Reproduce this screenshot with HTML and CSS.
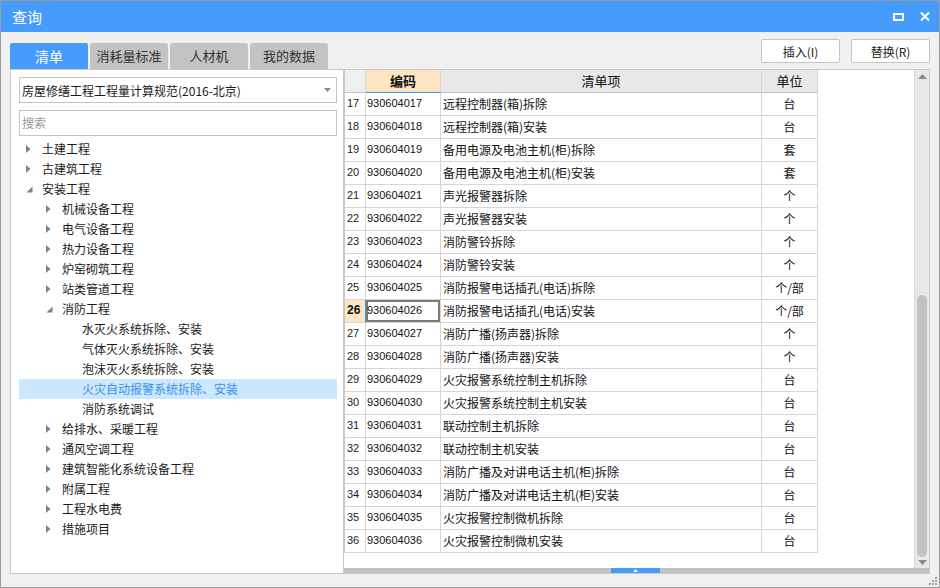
FILE: index.html
```html
<!DOCTYPE html>
<html lang="zh">
<head>
<meta charset="utf-8">
<title>查询</title>
<link rel="stylesheet" href="styles.css">
</head>
<body>
<div class="window">
  <div class="titlebar">
    <span class="title">查询</span>
    <span class="tb-icons">
      <span class="ico-max"></span>
      <svg class="ico-close" width="10" height="9" viewBox="0 0 10 9"><path d="M1 0.5 L9 8.5 M9 0.5 L1 8.5" stroke="#fff" stroke-width="2" fill="none"/></svg>
    </span>
  </div>
  <div class="toolbar">
    <div class="tabs">
      <div class="tab active">清单</div>
      <div class="tab">消耗量标准</div>
      <div class="tab">人材机</div>
      <div class="tab">我的数据</div>
    </div>
    <div class="buttons">
      <button class="btn">插入(I)</button>
      <button class="btn">替换(R)</button>
    </div>
  </div>
  <div class="main">
    <div class="left">
      <div class="select"><span>房屋修缮工程工程量计算规范(2016-北京)</span><svg width="7" height="4" viewBox="0 0 7 4"><path d="M0 0 H7 L3.5 4 Z" fill="#888"/></svg></div>
      <div class="search">搜索</div>
      <div class="tree">
        <div class="node l0"><span class="arr"><svg width="5" height="8" viewBox="0 0 5 8"><path d="M0 0 L4.5 4 L0 8 Z" fill="#808080"/></svg></span>土建工程</div>
        <div class="node l0"><span class="arr"><svg width="5" height="8" viewBox="0 0 5 8"><path d="M0 0 L4.5 4 L0 8 Z" fill="#808080"/></svg></span>古建筑工程</div>
        <div class="node l0"><span class="arr"><svg width="7" height="7" viewBox="0 0 7 7"><path d="M6.5 0.5 V6.5 H0.5 Z" fill="#808080"/></svg></span>安装工程</div>
        <div class="node l1"><span class="arr"><svg width="5" height="8" viewBox="0 0 5 8"><path d="M0 0 L4.5 4 L0 8 Z" fill="#808080"/></svg></span>机械设备工程</div>
        <div class="node l1"><span class="arr"><svg width="5" height="8" viewBox="0 0 5 8"><path d="M0 0 L4.5 4 L0 8 Z" fill="#808080"/></svg></span>电气设备工程</div>
        <div class="node l1"><span class="arr"><svg width="5" height="8" viewBox="0 0 5 8"><path d="M0 0 L4.5 4 L0 8 Z" fill="#808080"/></svg></span>热力设备工程</div>
        <div class="node l1"><span class="arr"><svg width="5" height="8" viewBox="0 0 5 8"><path d="M0 0 L4.5 4 L0 8 Z" fill="#808080"/></svg></span>炉窑砌筑工程</div>
        <div class="node l1"><span class="arr"><svg width="5" height="8" viewBox="0 0 5 8"><path d="M0 0 L4.5 4 L0 8 Z" fill="#808080"/></svg></span>站类管道工程</div>
        <div class="node l1"><span class="arr"><svg width="7" height="7" viewBox="0 0 7 7"><path d="M6.5 0.5 V6.5 H0.5 Z" fill="#808080"/></svg></span>消防工程</div>
        <div class="node l2"><span class="arr"></span>水灭火系统拆除、安装</div>
        <div class="node l2"><span class="arr"></span>气体灭火系统拆除、安装</div>
        <div class="node l2"><span class="arr"></span>泡沫灭火系统拆除、安装</div>
        <div class="node l2 selected"><span class="arr"></span>火灾自动报警系统拆除、安装</div>
        <div class="node l2"><span class="arr"></span>消防系统调试</div>
        <div class="node l1"><span class="arr"><svg width="5" height="8" viewBox="0 0 5 8"><path d="M0 0 L4.5 4 L0 8 Z" fill="#808080"/></svg></span>给排水、采暖工程</div>
        <div class="node l1"><span class="arr"><svg width="5" height="8" viewBox="0 0 5 8"><path d="M0 0 L4.5 4 L0 8 Z" fill="#808080"/></svg></span>通风空调工程</div>
        <div class="node l1"><span class="arr"><svg width="5" height="8" viewBox="0 0 5 8"><path d="M0 0 L4.5 4 L0 8 Z" fill="#808080"/></svg></span>建筑智能化系统设备工程</div>
        <div class="node l1"><span class="arr"><svg width="5" height="8" viewBox="0 0 5 8"><path d="M0 0 L4.5 4 L0 8 Z" fill="#808080"/></svg></span>附属工程</div>
        <div class="node l1"><span class="arr"><svg width="5" height="8" viewBox="0 0 5 8"><path d="M0 0 L4.5 4 L0 8 Z" fill="#808080"/></svg></span>工程水电费</div>
        <div class="node l1"><span class="arr"><svg width="5" height="8" viewBox="0 0 5 8"><path d="M0 0 L4.5 4 L0 8 Z" fill="#808080"/></svg></span>措施项目</div>
      </div>
    </div>
    <div class="right">
      <div class="grid-area">
        <div class="grid">
          <div class="row head">
            <div class="c rn"></div>
            <div class="c code sel-col">编码</div>
            <div class="c name">清单项</div>
            <div class="c unit">单位</div>
          </div>
          <div class="row"><div class="c rn">17</div><div class="c code">930604017</div><div class="c name">远程控制器(箱)拆除</div><div class="c unit">台</div></div>
          <div class="row"><div class="c rn">18</div><div class="c code">930604018</div><div class="c name">远程控制器(箱)安装</div><div class="c unit">台</div></div>
          <div class="row"><div class="c rn">19</div><div class="c code">930604019</div><div class="c name">备用电源及电池主机(柜)拆除</div><div class="c unit">套</div></div>
          <div class="row"><div class="c rn">20</div><div class="c code">930604020</div><div class="c name">备用电源及电池主机(柜)安装</div><div class="c unit">套</div></div>
          <div class="row"><div class="c rn">21</div><div class="c code">930604021</div><div class="c name">声光报警器拆除</div><div class="c unit">个</div></div>
          <div class="row"><div class="c rn">22</div><div class="c code">930604022</div><div class="c name">声光报警器安装</div><div class="c unit">个</div></div>
          <div class="row"><div class="c rn">23</div><div class="c code">930604023</div><div class="c name">消防警铃拆除</div><div class="c unit">个</div></div>
          <div class="row"><div class="c rn">24</div><div class="c code">930604024</div><div class="c name">消防警铃安装</div><div class="c unit">个</div></div>
          <div class="row"><div class="c rn">25</div><div class="c code">930604025</div><div class="c name">消防报警电话插孔(电话)拆除</div><div class="c unit">个/部</div></div>
          <div class="row current"><div class="c rn">26</div><div class="c code focus">930604026</div><div class="c name">消防报警电话插孔(电话)安装</div><div class="c unit">个/部</div></div>
          <div class="row"><div class="c rn">27</div><div class="c code">930604027</div><div class="c name">消防广播(扬声器)拆除</div><div class="c unit">个</div></div>
          <div class="row"><div class="c rn">28</div><div class="c code">930604028</div><div class="c name">消防广播(扬声器)安装</div><div class="c unit">个</div></div>
          <div class="row"><div class="c rn">29</div><div class="c code">930604029</div><div class="c name">火灾报警系统控制主机拆除</div><div class="c unit">台</div></div>
          <div class="row"><div class="c rn">30</div><div class="c code">930604030</div><div class="c name">火灾报警系统控制主机安装</div><div class="c unit">台</div></div>
          <div class="row"><div class="c rn">31</div><div class="c code">930604031</div><div class="c name">联动控制主机拆除</div><div class="c unit">台</div></div>
          <div class="row"><div class="c rn">32</div><div class="c code">930604032</div><div class="c name">联动控制主机安装</div><div class="c unit">台</div></div>
          <div class="row"><div class="c rn">33</div><div class="c code">930604033</div><div class="c name">消防广播及对讲电话主机(柜)拆除</div><div class="c unit">台</div></div>
          <div class="row"><div class="c rn">34</div><div class="c code">930604034</div><div class="c name">消防广播及对讲电话主机(柜)安装</div><div class="c unit">台</div></div>
          <div class="row"><div class="c rn">35</div><div class="c code">930604035</div><div class="c name">火灾报警控制微机拆除</div><div class="c unit">台</div></div>
          <div class="row"><div class="c rn">36</div><div class="c code">930604036</div><div class="c name">火灾报警控制微机安装</div><div class="c unit">台</div></div>
        </div>
        <div class="vscroll">
          <svg class="up" width="9" height="5" viewBox="0 0 9 5"><path d="M0 5 L4.5 0 L9 5 Z" fill="#8a8a8a"/></svg>
          <div class="vtrack"><div class="vthumb"></div></div>
          <svg class="down" width="9" height="5" viewBox="0 0 9 5"><path d="M0 0 L9 0 L4.5 5 Z" fill="#8a8a8a"/></svg>
        </div>
      </div>
      <div class="hscroll"><div class="hthumb"><svg width="5" height="3" viewBox="0 0 5 3"><path d="M0 3 L2.5 0 L5 3 Z" fill="#fff"/></svg></div></div>
    </div>
  </div>
  <div class="footer">
    <svg class="grip" width="8" height="8" viewBox="0 0 8 8"><g fill="#a0a0a0"><rect x="6" y="0" width="2" height="2"/><rect x="3" y="3" width="2" height="2"/><rect x="6" y="3" width="2" height="2"/><rect x="0" y="6" width="2" height="2"/><rect x="3" y="6" width="2" height="2"/><rect x="6" y="6" width="2" height="2"/></g></svg>
  </div>
</div>
</body>
</html>
```

FILE: styles.css
```css
* { box-sizing: border-box; }
html, body { margin: 0; padding: 0; }
body {
  font-family: "Noto Sans CJK SC", "Liberation Sans", sans-serif;
  font-size: 12px;
  color: #1a1a1a;
  background: #f0f0f0;
}
.window {
  width: 940px;
  height: 588px;
  border: 1px solid #9c9c9c;
  background: #f0f0f0;
  display: flex;
  flex-direction: column;
  position: relative;
}
.titlebar {
  height: 31px;
  background: #459cfd;
  display: flex;
  align-items: center;
  justify-content: space-between;
  padding: 0 9px 0 11px;
  color: #fff;
}
.title { font-size: 15px; line-height: 31px; }
.tb-icons { display: flex; align-items: center; gap: 16px; }
.ico-max {
  width: 11px;
  height: 8px;
  border: 2px solid #fff;
  display: block;
}
.ico-close { display: block; }

.toolbar {
  height: 37px;
  padding: 0 9px;
  display: flex;
  justify-content: space-between;
}
.tabs { display: flex; align-items: flex-end; gap: 2px; }
.tab {
  width: 78px;
  height: 26px;
  line-height: 26px;
  text-align: center;
  background: #c3c3c3;
  color: #333;
  font-size: 13px;
  border-radius: 2px 2px 0 0;
}
.tab.active { background: #459cfd; color: #fff; font-size: 14px; }
.buttons { display: flex; gap: 11px; padding-top: 7px; }
.btn {
  width: 79px;
  height: 24px;
  background: #fff;
  border: 1px solid #c4c4c4;
  border-radius: 2px;
  font-family: "Noto Sans CJK SC", "Liberation Sans", sans-serif;
  font-size: 12px;
  color: #222;
  padding: 0;
}

.main {
  height: 505px;
  padding: 0 9px;
  display: flex;
}
.left {
  width: 334px;
  background: #fff;
  border: 1px solid #c8c8c8;
  padding: 7px 6px 0 8px;
}
.select {
  height: 26px;
  border: 1px solid #c4c4c4;
  display: flex;
  align-items: center;
  justify-content: space-between;
  padding: 0 5px 0 2px;
  font-size: 12px;
  color: #1a1a1a;
}
.select svg { display: block; }
.search {
  height: 26px;
  margin-top: 7px;
  border: 1px solid #c4c4c4;
  padding: 0 2px;
  line-height: 24px;
  color: #999;
  font-size: 12px;
}
.tree { margin-top: 3px; }
.node {
  height: 20px;
  line-height: 20px;
  display: flex;
  align-items: center;
  font-size: 12px;
  color: #1a1a1a;
  white-space: nowrap;
}
.node.l1 { padding-left: 20px; }
.node.l2 { padding-left: 40px; }
.arr {
  width: 23px;
  flex: none;
  display: flex;
  align-items: center;
  padding-left: 7px;
}
.arr svg { display: block; }
.node.selected { background: #cce8ff; color: #3a8ee6; }

.right {
  flex: 1;
  border: 1px solid #c8c8c8;
  border-left: none;
  background: #fff;
  display: flex;
  flex-direction: column;
}
.grid-area { flex: 1; display: flex; min-height: 0; }
.grid { flex: 1; }
.row { display: flex; height: 23px; }
.c {
  height: 23px;
  border-right: 1px solid #d6d6d6;
  border-bottom: 1px solid #d6d6d6;
  line-height: 21px;
  white-space: nowrap;
  overflow: hidden;
  font-size: 12px;
  color: #111;
}
.rn {
  width: 22px;
  border-left: 1px solid #c8c8c8;
  font-family: "Liberation Sans", sans-serif;
  font-size: 11px;
  padding-left: 2px;
  color: #222;
}
.code {
  width: 75px;
  font-family: "Liberation Sans", sans-serif;
  font-size: 11px;
  padding-left: 1px;
}
.name { width: 321px; padding-left: 2px; }
.unit { width: 56px; text-align: center; }
.head .c {
  background: #e8e8e8;
  border-bottom: 1px solid #c4c4c4;
  text-align: center;
  padding-left: 0;
  font-family: "Noto Sans CJK SC", sans-serif;
  font-size: 13px;
}
.head .rn { background: #efefef; }
.head .sel-col {
  background: #fde4c2;
  font-weight: bold;
  border-bottom: 1px solid #3d97f0;
}
.current .rn {
  background: #fde4c2;
  font-weight: bold;
  font-size: 12px;
  border-right: 1px solid #3d97f0;
  color: #111;
}
.focus { box-shadow: inset 0 0 0 2px #7a7a7a; }

.vscroll {
  width: 15px;
  background: #e8e8e8;
  border-left: 1px solid #dadada;
  display: flex;
  flex-direction: column;
  align-items: center;
  padding: 4px 0 3px;
}
.vscroll svg { display: block; flex: none; }
.vtrack {
  flex: 1;
  width: 10px;
  margin: 4px 0 3px;
  display: flex;
  flex-direction: column;
  justify-content: flex-end;
}
.vthumb {
  height: 262px;
  background: #c2c2c2;
  border-radius: 5px;
}
.hscroll {
  height: 5px;
  background: #c2c2c2;
  padding-left: 267px;
}
.hthumb {
  width: 49px;
  height: 5px;
  background: #459cfd;
  display: flex;
  justify-content: center;
  align-items: flex-end;
  padding-bottom: 1px;
}
.hthumb svg { display: block; }

.footer { flex: 1; position: relative; }
.grip { position: absolute; right: 2px; bottom: 2px; display: block; }
```
